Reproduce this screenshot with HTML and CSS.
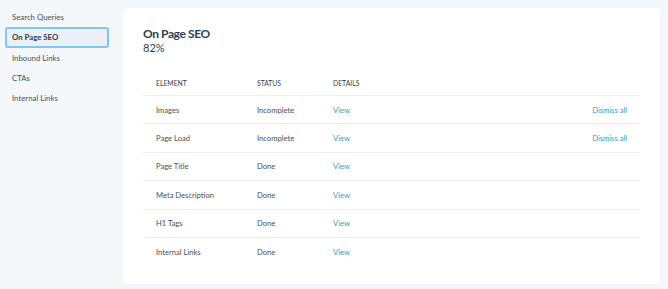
FILE: index.html
```html
<!DOCTYPE html>
<html lang="en">

<head>
    <meta charset="UTF-8">
    <title>On Page SEO</title>
    <link rel="stylesheet" href="styles.css">
</head>

<body>
    <div class="layout">
        <nav class="sidebar">
            <a class="nav-item">Search Queries</a>
            <a class="nav-item active">On Page SEO</a>
            <a class="nav-item">Inbound Links</a>
            <a class="nav-item">CTAs</a>
            <a class="nav-item">Internal Links</a>
        </nav>

        <main class="card">
            <h2 class="card-title">On Page SEO</h2>
            <div class="score">82%</div>

            <table class="seo-table">
                <thead>
                    <tr>
                        <th class="col-element">Element</th>
                        <th class="col-status">Status</th>
                        <th>Details</th>
                        <th></th>
                    </tr>
                </thead>
                <tbody>
                    <tr>
                        <td>Images</td>
                        <td>Incomplete</td>
                        <td><a class="link">View</a></td>
                        <td class="actions"><a class="link">Dismiss all</a></td>
                    </tr>
                    <tr>
                        <td>Page Load</td>
                        <td>Incomplete</td>
                        <td><a class="link">View</a></td>
                        <td class="actions"><a class="link">Dismiss all</a></td>
                    </tr>
                    <tr>
                        <td>Page Title</td>
                        <td>Done</td>
                        <td><a class="link">View</a></td>
                        <td></td>
                    </tr>
                    <tr>
                        <td>Meta Description</td>
                        <td>Done</td>
                        <td><a class="link">View</a></td>
                        <td></td>
                    </tr>
                    <tr>
                        <td>H1 Tags</td>
                        <td>Done</td>
                        <td><a class="link">View</a></td>
                        <td></td>
                    </tr>
                    <tr>
                        <td>Internal Links</td>
                        <td>Done</td>
                        <td><a class="link">View</a></td>
                        <td></td>
                    </tr>
                </tbody>
            </table>
        </main>
    </div>
</body>

</html>
```

FILE: styles.css
```css
body {
    margin: 0;
    font-family: 'Lato', 'Noto Sans', sans-serif;
    background-color: #f5f8fa;
    color: #33475b;
}

.layout {
    display: flex;
    align-items: flex-start;
    padding: 8px 8px 0 5px;
}

.sidebar {
    width: 104px;
    display: flex;
    flex-direction: column;
    margin-top: -1px;
    margin-right: 14px;
}

.nav-item {
    display: block;
    height: 21px;
    line-height: 17px;
    padding: 0 5px;
    font-size: 7.8px;
    color: #4a4f55;
    border: 2px solid transparent;
    border-radius: 3px;
    box-sizing: border-box;
    margin-bottom: -0.7px;
}

.nav-item.active {
    font-weight: bold;
    color: #2d3e50;
    background-color: #eaf0f6;
    border-color: #7fc6f0;
}

.card {
    flex: 1;
    height: 276px;
    box-sizing: border-box;
    padding: 19px 20px;
    background-color: white;
    border-radius: 3px;
    box-shadow: 0 0 1px rgba(0, 0, 0, 0.08);
}

.card-title {
    margin: 0;
    font-size: 12px;
    line-height: 14px;
    font-weight: bold;
    letter-spacing: -0.4px;
    color: #2d3e50;
}

.score {
    font-size: 11px;
    line-height: 13px;
    color: #2d3e50;
}

.seo-table {
    width: 100%;
    margin-top: 16px;
    border-collapse: collapse;
    font-size: 7.6px;
    color: #4a4f55;
}

.seo-table th {
    text-align: left;
    font-size: 6.8px;
    font-weight: normal;
    text-transform: uppercase;
    color: #2d3e50;
    height: 25px;
    padding: 0 13px;
    border-bottom: 1px solid #eaf0f6;
}

.seo-table td {
    height: 27.4px;
    padding: 0 13px;
    border-bottom: 1px solid #eaf0f6;
}

.seo-table tbody tr:last-child td {
    border-bottom: none;
}

.col-element {
    width: 75px;
}

.col-status {
    width: 50px;
}

.actions {
    text-align: right;
}

.link {
    color: #2aa3bd;
}
```
